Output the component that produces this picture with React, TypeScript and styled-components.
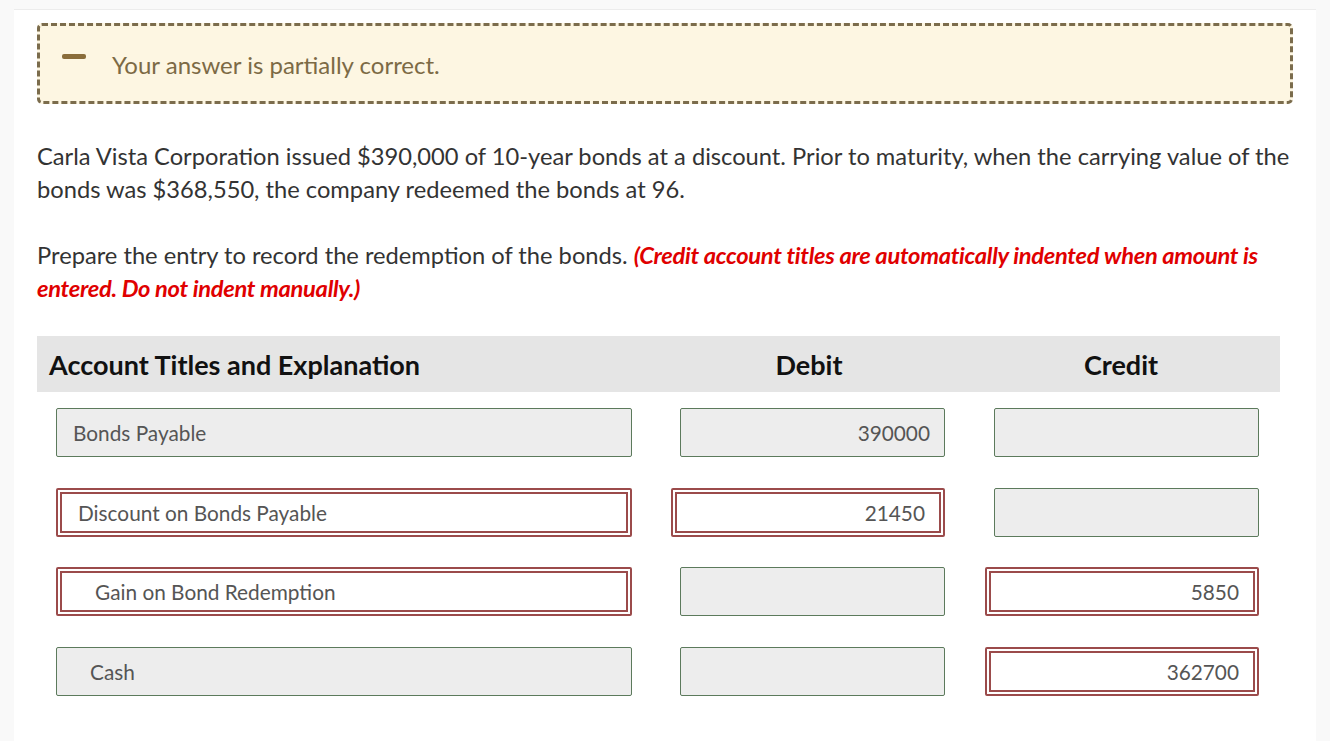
import styled, { createGlobalStyle } from "styled-components";

const GlobalStyle = createGlobalStyle`
  html, body {
    margin: 0;
    padding: 0;
    background: #f9f9f9;
  }
  body {
    font-family: Lato, "Open Sans", sans-serif;
    color: #333;
  }
`;

interface Entry {
  account: string;
  indent?: boolean;
  accountError?: boolean;
  debit?: string;
  debitError?: boolean;
  credit?: string;
  creditError?: boolean;
}

const entries: Entry[] = [
  { account: "Bonds Payable", debit: "390000" },
  {
    account: "Discount on Bonds Payable",
    accountError: true,
    debit: "21450",
    debitError: true,
  },
  {
    account: "Gain on Bond Redemption",
    indent: true,
    accountError: true,
    credit: "5850",
    creditError: true,
  },
  { account: "Cash", indent: true, credit: "362700", creditError: true },
];

const Page = styled.div`
  margin: 9px 14px 0 14px;
  padding: 13px 22px 40px 23px;
  background: #fff;
  border-top: 1px solid #ececec;
  min-height: 680px;
`;

const Banner = styled.div`
  display: flex;
  align-items: center;
  gap: 26px;
  height: 75px;
  margin-right: 1px;
  padding: 0 22px;
  background: #fdf6e2;
  border: 3px dashed #7b6c4c;
  border-radius: 5px;
`;

const MinusIcon = styled.span`
  width: 24px;
  height: 5px;
  border-radius: 2px;
  background: #8a6d3b;
  margin-top: -14px;
`;

const BannerText = styled.span`
  font-size: 24px;
  color: #7c6a45;
  margin-top: 2px;
`;

const Question = styled.p`
  margin: 36px 0 0 0;
  font-size: 23.7px;
  line-height: 33px;
  color: #333;
`;

const Instruction = styled(Question)`
  margin-top: 33px;
`;

const Hint = styled.span`
  color: #e00000;
  font-weight: 700;
  font-style: italic;
  letter-spacing: -0.3px;
`;

const Table = styled.div`
  margin-top: 31px;
  width: 1243px;
`;

const Grid = styled.div`
  display: grid;
  grid-template-columns: 619px 306px 318px;
  align-items: center;
`;

const Header = styled(Grid)`
  height: 56px;
  background: #e5e5e5;
  margin-bottom: 16px;
`;

const HeadCell = styled.div<{ $center?: boolean }>`
  font-size: 27px;
  font-weight: 700;
  color: #111;
  padding-left: ${(p) => (p.$center ? 0 : 12)}px;
  text-align: ${(p) => (p.$center ? "center" : "left")};
`;

const Body = styled.div`
  display: flex;
  flex-direction: column;
  gap: 30.5px;
`;

const Field = styled.div<{
  $error?: boolean;
  $amount?: boolean;
  $indent?: boolean;
  $right?: number;
}>`
  box-sizing: border-box;
  height: 49px;
  display: flex;
  align-items: center;
  justify-content: ${(p) => (p.$amount ? "flex-end" : "flex-start")};
  font-size: 20.8px;
  color: #555;
  border-radius: 2px;
  background: ${(p) => (p.$error ? "#fff" : "#ededed")};
  border: ${(p) => (p.$error ? "6px double #9b4b4b" : "1px solid #5c7a5c")};
  padding: 0 ${(p) => (p.$amount ? 14 : 0)}px 0
    ${(p) => (p.$amount ? 0 : p.$indent ? 33 : 16)}px;
  ${(p) =>
    p.$amount
      ? `width: ${p.$error ? 274 : 265}px; justify-self: end; margin-right: ${p.$right}px;`
      : `width: 576px; margin-left: 19px;`}
`;

export default function App() {
  return (
    <>
      <GlobalStyle />
      <Page>
        <Banner>
          <MinusIcon />
          <BannerText>Your answer is partially correct.</BannerText>
        </Banner>

        <Question>
          Carla Vista Corporation issued $390,000 of 10-year bonds at a
          discount. Prior to maturity, when the carrying value of the bonds was
          $368,550, the company redeemed the bonds at 96.
        </Question>

        <Instruction>
          Prepare the entry to record the redemption of the bonds.{" "}
          <Hint>
            (Credit account titles are automatically indented when amount is
            entered. Do not indent manually.)
          </Hint>
        </Instruction>

        <Table>
          <Header>
            <HeadCell>Account Titles and Explanation</HeadCell>
            <HeadCell $center>Debit</HeadCell>
            <HeadCell $center>Credit</HeadCell>
          </Header>
          <Body>
            {entries.map((e) => (
              <Grid key={e.account}>
                <Field $error={e.accountError} $indent={e.indent}>
                  {e.account}
                </Field>
                <Field $amount $right={17} $error={e.debitError}>
                  {e.debit}
                </Field>
                <Field $amount $right={21} $error={e.creditError}>
                  {e.credit}
                </Field>
              </Grid>
            ))}
          </Body>
        </Table>
      </Page>
    </>
  );
}
